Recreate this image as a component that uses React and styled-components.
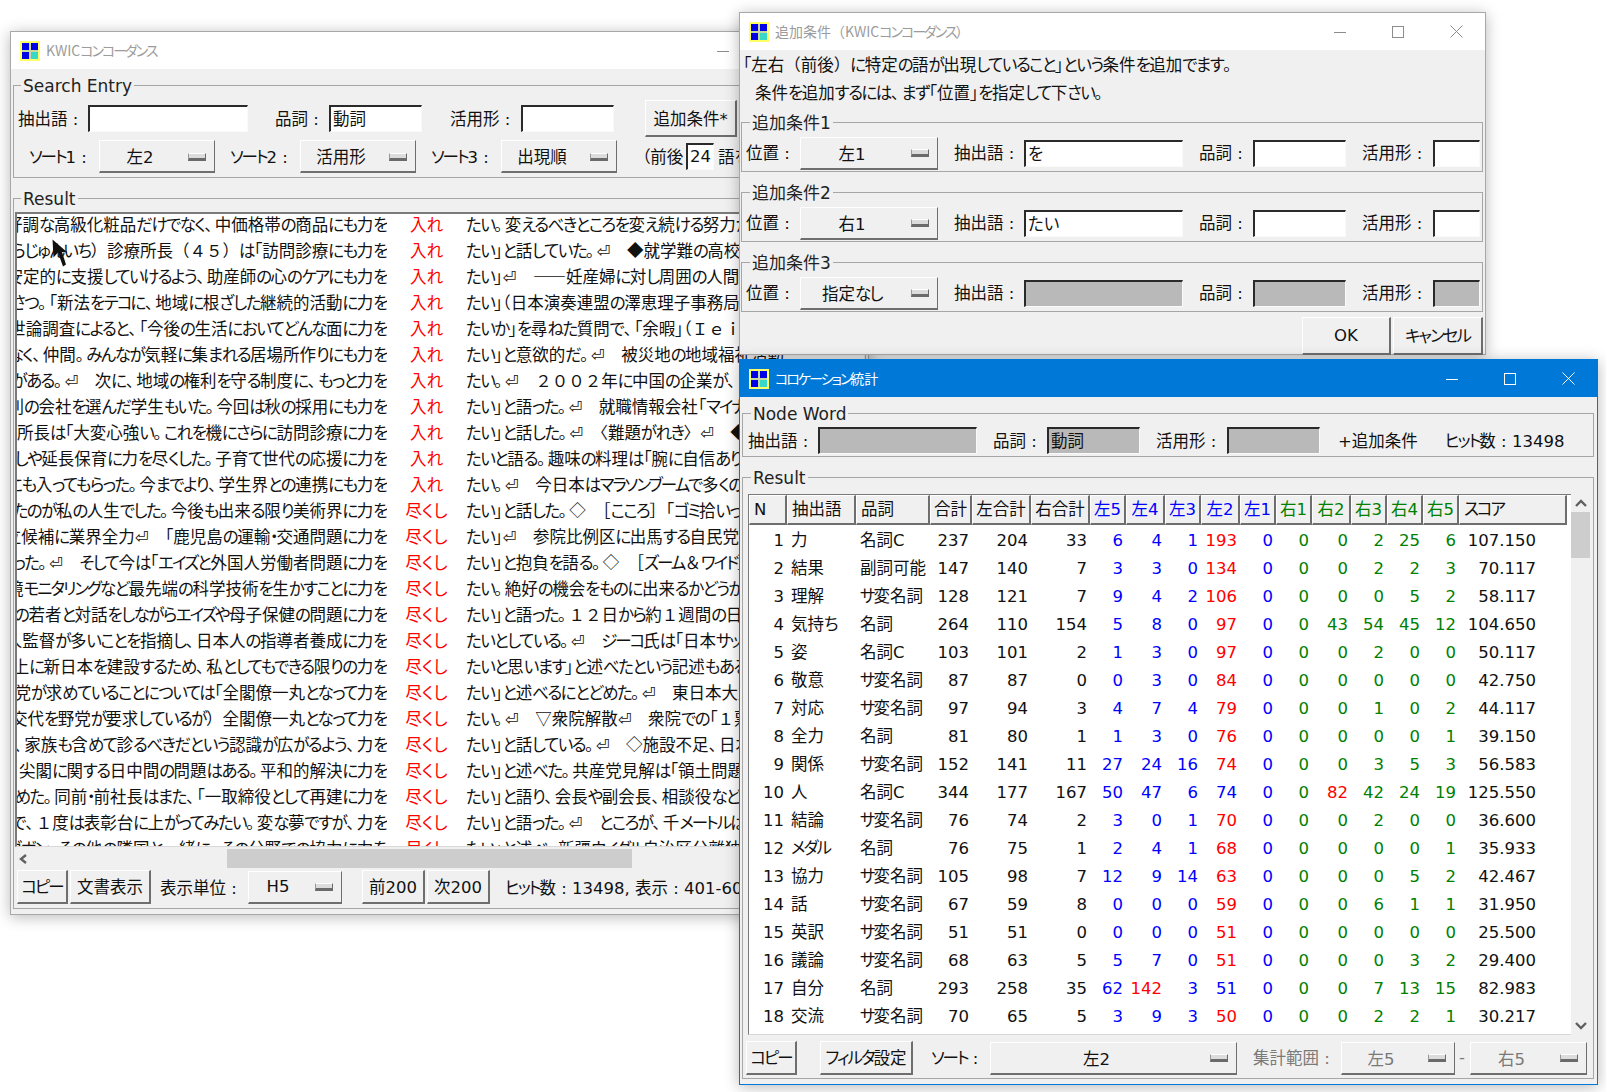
import React from "react";
import styled, { createGlobalStyle } from "styled-components";

const GlobalStyle = createGlobalStyle`
  html, body {
    margin: 0;
    padding: 0;
    background: #fff;
  }
  body {
    font-family: "DejaVu Sans", "Noto Sans CJK JP", sans-serif;
    font-size: 16.5px;
    color: #111;
    font-feature-settings: "palt";
  }
`;

const KWIC_ROWS = [
  ["好調な高級化粧品だけでなく、中価格帯の商品にも力を", "入れ", "たい。変えるべきところを変え続ける努力が"],
  ["（しらじゅんいち）診療所長（４５）は「訪問診療にも力を", "入れ", "たい」と話していた。⏎　◆就学難の高校生"],
  ["安定的に支援していけるよう、助産師の心のケアにも力を", "入れ", "たい」⏎　――妊産婦に対し周囲の人間が"],
  ["あいさつ。「新法をテコに、地域に根ざした継続的活動に力を", "入れ", "たい」（日本演奏連盟の澤恵理子事務局"],
  ["世論調査によると、「今後の生活においてどんな面に力を", "入れ", "たいか」を尋ねた質問で、「余暇」（Ｉｅｉ"],
  ["少なく、仲間。みんなが気軽に集まれる居場所作りにも力を", "入れ", "たい」と意欲的だ。⏎　被災地の地域福祉活動"],
  ["必要がある。⏎　次に、地域の権利を守る制度に、もっと力を", "入れ", "たい。⏎　２００２年に中国の企業が、"],
  ["別の会社を選んだ学生もいた。今回は秋の採用にも力を", "入れ", "たい」と語った。⏎　就職情報会社「マイナビ"],
  ["原所長は「大変心強い。これを機にさらに訪問診療に力を", "入れ", "たい」と話した。⏎　〈難題がれき〉⏎　◆大"],
  ["励ましや延長保育に力を尽くした。子育て世代の応援に力を", "入れ", "たいと語る。趣味の料理は「腕に自信あり"],
  ["委員にも入ってもらった。今までより、学生界との連携にも力を", "入れ", "たい。⏎　今日本はマラソンブームで多くの"],
  ["したのが私の人生でした。今後も出来る限り美術界に力を", "尽くし", "たい」と話した。◇　［こころ］「ゴミ拾いって"],
  ["立候補に業界全力⏎　「鹿児島の運輸・交通問題に力を", "尽くし", "たい」⏎　参院比例区に出馬する自民党の"],
  ["だった。⏎　そして今は「エイズと外国人労働者問題に力を", "尽くし", "たい」と抱負を語る。◇　［ズーム＆ワイド］"],
  ["環境モニタリングなど最先端の科学技術を生かすことに力を", "尽くし", "たい。絶好の機会をものに出来るかどうかで"],
  ["各国の若者と対話をしながらエイズや母子保健の問題に力を", "尽くし", "たい」と語った。１２日から約１週間の日程"],
  ["人監督が多いことを指摘し、日本人の指導者養成に力を", "尽くし", "たいとしている。⏎　ジーコ氏は「日本サッカー"],
  ["地上に新日本を建設するため、私としてもできる限りの力を", "尽くし", "たいと思います」と述べたという記述もある。"],
  ["野党が求めていることについては「全閣僚一丸となって力を", "尽くし", "たい」と述べるにとどめた。⏎　東日本大震災"],
  ["政権交代を野党が要求しているが）全閣僚一丸となって力を", "尽くし", "たい。⏎　▽衆院解散⏎　衆院での「１票"],
  ["なく、家族も含めて診るべきだという認識が広がるよう、力を", "尽くし", "たい」と話している。⏎　◇施設不足、日本"],
  ["、尖閣に関する日中間の問題はある。平和的解決に力を", "尽くし", "たい」と述べた。共産党見解は「領土問題"],
  ["求めた。同前・前社長はまた、「一取締役として再建に力を", "尽くし", "たい」と語り、会長や副会長、相談役など"],
  ["まで、１度は表彰台に上がってみたい。変な夢ですが、力を", "尽くし", "たい」と語った。⏎　ところが、千メートルは"],
  ["ゴボン、その他の隣国と一緒に、その分野での協力に力を", "尽くし", "たい」と述べ、新疆ウイグル自治区分離独立"],
];

const COLS = [
  { label: "N", kind: "n", w: 38 },
  { label: "抽出語", kind: "word", w: 69 },
  { label: "品詞", kind: "word", w: 74 },
  { label: "合計", kind: "sum", w: 42 },
  { label: "左合計", kind: "sum", w: 59 },
  { label: "右合計", kind: "sum", w: 59 },
  { label: "左5", kind: "left", w: 36 },
  { label: "左4", kind: "left", w: 39 },
  { label: "左3", kind: "left", w: 36 },
  { label: "左2", kind: "left", w: 39 },
  { label: "左1", kind: "left", w: 36 },
  { label: "右1", kind: "right", w: 36 },
  { label: "右2", kind: "right", w: 39 },
  { label: "右3", kind: "right", w: 36 },
  { label: "右4", kind: "right", w: 36 },
  { label: "右5", kind: "right", w: 36 },
  { label: "スコア", kind: "score", w: 108 },
];

const COLLOC_ROWS = [
  [1, "力", "名詞C", 237, 204, 33, 6, 4, 1, 193, 0, 0, 0, 2, 25, 6, "107.150"],
  [2, "結果", "副詞可能", 147, 140, 7, 3, 3, 0, 134, 0, 0, 0, 2, 2, 3, "70.117"],
  [3, "理解", "サ変名詞", 128, 121, 7, 9, 4, 2, 106, 0, 0, 0, 0, 5, 2, "58.117"],
  [4, "気持ち", "名詞", 264, 110, 154, 5, 8, 0, 97, 0, 0, 43, 54, 45, 12, "104.650"],
  [5, "姿", "名詞C", 103, 101, 2, 1, 3, 0, 97, 0, 0, 0, 2, 0, 0, "50.117"],
  [6, "敬意", "サ変名詞", 87, 87, 0, 0, 3, 0, 84, 0, 0, 0, 0, 0, 0, "42.750"],
  [7, "対応", "サ変名詞", 97, 94, 3, 4, 7, 4, 79, 0, 0, 0, 1, 0, 2, "44.117"],
  [8, "全力", "名詞", 81, 80, 1, 1, 3, 0, 76, 0, 0, 0, 0, 0, 1, "39.150"],
  [9, "関係", "サ変名詞", 152, 141, 11, 27, 24, 16, 74, 0, 0, 0, 3, 5, 3, "56.583"],
  [10, "人", "名詞C", 344, 177, 167, 50, 47, 6, 74, 0, 0, 82, 42, 24, 19, "125.550"],
  [11, "結論", "サ変名詞", 76, 74, 2, 3, 0, 1, 70, 0, 0, 0, 2, 0, 0, "36.600"],
  [12, "メダル", "名詞", 76, 75, 1, 2, 4, 1, 68, 0, 0, 0, 0, 0, 1, "35.933"],
  [13, "協力", "サ変名詞", 105, 98, 7, 12, 9, 14, 63, 0, 0, 0, 0, 5, 2, "42.467"],
  [14, "話", "サ変名詞", 67, 59, 8, 0, 0, 0, 59, 0, 0, 0, 6, 1, 1, "31.950"],
  [15, "英訳", "サ変名詞", 51, 51, 0, 0, 0, 0, 51, 0, 0, 0, 0, 0, 0, "25.500"],
  [16, "議論", "サ変名詞", 68, 63, 5, 5, 7, 0, 51, 0, 0, 0, 0, 3, 2, "29.400"],
  [17, "自分", "名詞", 293, 258, 35, 62, 142, 3, 51, 0, 0, 0, 7, 13, 15, "82.983"],
  [18, "交流", "サ変名詞", 70, 65, 5, 3, 9, 3, 50, 0, 0, 0, 2, 2, 1, "30.217"],
];

const CONDITIONS = [
  { title: "追加条件1", pos: "左1", word: "を" },
  { title: "追加条件2", pos: "右1", word: "たい" },
  { title: "追加条件3", pos: "指定なし", off: true },
];

const kindColor = (kind) => {
  if (kind === "left") return "#0000ff";
  if (kind === "right") return "#008000";
  return "#111";
};

// the original font has narrow kana and full width brackets, so text is split into runs
const RUNS = /[\u3040-\u309f]+|[、。]+|[\u30a0-\u30ff・]+|[（）０-９Ａ-Ｚａ-ｚ＆［］〈〉　◆◇▽―]+|[^\u3040-\u30ff、。・（）０-９Ａ-Ｚａ-ｚ＆［］〈〉　◆◇▽―]+/g;

const Jp = ({ children }) => {
  const text = String(children);
  return text.match(RUNS).map((run, i) => {
    if (/^[\u3040-\u309f]/.test(run)) return <Hira key={i}>{run}</Hira>;
    if (/^[、。]/.test(run)) return <Punct key={i}>{run}</Punct>;
    if (/^[\u30a0-\u30ff・]/.test(run)) return <Kata key={i}>{run}</Kata>;
    if (/^[（）０-９Ａ-Ｚａ-ｚ＆［］〈〉　◆◇▽―]/.test(run)) return <Wide key={i}>{run}</Wide>;
    return <React.Fragment key={i}>{run}</React.Fragment>;
  });
};

const AppIcon = () => (
  <svg width="20" height="20" viewBox="0 0 20 20">
    <rect width="20" height="20" fill="#ffff66" />
    <rect x="2" y="2" width="16" height="16" fill="#c8d8a0" />
    <rect x="2" y="2" width="7" height="7" fill="#0000e6" />
    <rect x="11" y="2" width="7" height="7" fill="#0000e6" />
    <rect x="2" y="11" width="7" height="7" fill="#0000e6" />
    <rect x="11" y="11" width="7" height="7" fill="#38d8c8" />
  </svg>
);

const TitleControls = ({ color }) => (
  <>
    <CtlBox>
      <svg width="12" height="12" viewBox="0 0 12 12">
        <path d="M0 6.5H12" stroke={color} strokeWidth="1" />
      </svg>
    </CtlBox>
    <CtlBox>
      <svg width="12" height="12" viewBox="0 0 12 12">
        <rect x="0.5" y="0.5" width="11" height="11" fill="none" stroke={color} strokeWidth="1" />
      </svg>
    </CtlBox>
    <CtlBox>
      <svg width="13" height="13" viewBox="0 0 13 13">
        <path d="M0.5 0.5L12.5 12.5M12.5 0.5L0.5 12.5" stroke={color} strokeWidth="1" />
      </svg>
    </CtlBox>
  </>
);

const TitleBar = ({ title, active }) => (
  <TitleRow $active={active}>
    <AppIcon />
    <TitleText $active={active}><Jp>{title}</Jp></TitleText>
    <TitleControls color={active ? "#fff" : "#8c8c8c"} />
  </TitleRow>
);

const Select = ({ w, ml, off, children }) => (
  <SelectBox type="button" $w={w} $ml={ml}>
    <SelectText $off={off}><Jp>{children}</Jp></SelectText>
    <SelectArrow />
  </SelectBox>
);

const Chevron = ({ d }) => (
  <svg width="14" height="10" viewBox="0 0 14 10">
    <path d={d} fill="none" stroke="#606060" strokeWidth="2.4" />
  </svg>
);

const App = () => (
  <>
    <GlobalStyle />
    <Desktop>
      <KwicWindow>
        <TitleBar title="KWICコンコーダンス" />
        <SearchGroup>
          <GroupTitle $ml={7}>Search Entry</GroupTitle>
          <FieldRow $h={37}>
            <Label $w={70} $ml={4}>抽出語 :</Label>
            <Input $w={160} readOnly value="" />
            <Label $w={54} $ml={27}>品詞 :</Label>
            <Input $w={93} readOnly value="動詞" />
            <Label $w={71} $ml={28}>活用形 :</Label>
            <Input $w={93} readOnly value="" />
            <Button $w={92} $h={37} $ml={31}>追加条件*</Button>
          </FieldRow>
          <FieldRow $h={33} $mt={3}>
            <Label $w={70} $ml={15}><Jp>ソート1 :</Jp></Label>
            <Select w={116}>左2</Select>
            <Label $w={70} $ml={15}><Jp>ソート2 :</Jp></Label>
            <Select w={116}>活用形</Select>
            <Label $w={70} $ml={15}><Jp>ソート3 :</Jp></Label>
            <Select w={116}>出現順</Select>
            <Label $w={44} $ml={25}>（前後</Label>
            <Input $w={28} readOnly value="24" />
            <Label $w={40} $ml={4}><Jp>語を</Jp></Label>
          </FieldRow>
        </SearchGroup>
        <KwicResult>
          <GroupTitle $ml={6}>Result</GroupTitle>
          <KwicList>
            {KWIC_ROWS.map((row, i) => (
              <KwicRow key={i}>
                <KwicLeft>
                  <span><Jp>{row[0]}</Jp></span>
                </KwicLeft>
                <KwicKey>{row[1]}</KwicKey>
                <KwicRight><Jp>{row[2]}</Jp></KwicRight>
              </KwicRow>
            ))}
          </KwicList>
          <HScroll>
            <HScrollArrow>
              <Chevron d="M9 1L4 5L9 9" />
            </HScrollArrow>
            <HThumb />
          </HScroll>
          <FootRow>
            <Button $w={51} $h={34}><Jp>コピー</Jp></Button>
            <Button $w={81} $h={34} $ml={2}>文書表示</Button>
            <Label $w={88} $ml={9}>表示単位 :</Label>
            <Select w={94}>H5</Select>
            <Button $w={63} $h={34} $ml={20}>前200</Button>
            <Button $w={63} $h={34} $ml={2}>次200</Button>
            <Label $ml={15}><Jp>ヒット数 : 13498, 表示 : 401-600</Jp></Label>
          </FootRow>
        </KwicResult>
      </KwicWindow>

      <DialogWindow>
        <TitleBar title="追加条件（KWICコンコーダンス）" />
        <DialogLine $pl={3} $mt={1}><Jp>「左右（前後）に特定の語が出現していること」という条件を追加でます。</Jp></DialogLine>
        <DialogLine $pl={15}><Jp>条件を追加するには、まず「位置」を指定して下さい。</Jp></DialogLine>
        {CONDITIONS.map((c) => (
          <CondGroup key={c.title}>
            <GroupTitle>{c.title}</GroupTitle>
            <FieldRow $h={34}>
              <Label $w={54} $ml={4}>位置 :</Label>
              <Select w={138}>{c.pos}</Select>
              <Label $w={70} $ml={16}>抽出語 :</Label>
              <Input $w={159} $off={c.off} readOnly value={c.word || ""} />
              <Label $w={54} $ml={16}>品詞 :</Label>
              <Input $w={93} $off={c.off} readOnly value="" />
              <Label $w={71} $ml={16}>活用形 :</Label>
              <Input $w={47} $off={c.off} readOnly value="" />
            </FieldRow>
          </CondGroup>
        ))}
        <DialogFoot>
          <Button $w={89} $h={38}>OK</Button>
          <Button $w={90} $h={38} $ml={2}><Jp>キャンセル</Jp></Button>
        </DialogFoot>
      </DialogWindow>

      <CollocWindow>
        <TitleBar title="コロケーション統計" active />
        <NodeGroup>
          <GroupTitle>Node Word</GroupTitle>
          <FieldRow $h={27}>
            <Label $w={70} $ml={5}>抽出語 :</Label>
            <Input $w={159} $off readOnly value="" />
            <Label $w={54} $ml={16}>品詞 :</Label>
            <Input $w={93} $off readOnly value="動詞" />
            <Label $w={71} $ml={16}>活用形 :</Label>
            <Input $w={93} $off readOnly value="" />
            <Label $ml={18}>+追加条件</Label>
            <Label $ml={27}><Jp>ヒット数 : 13498</Jp></Label>
          </FieldRow>
        </NodeGroup>
        <CollocResult>
          <GroupTitle $ml={3}>Result</GroupTitle>
          <TableWrap>
            <Table>
              <HeadRow>
                {COLS.map((c) => (
                  <HeadCell key={c.label} $kind={c.kind}><Jp>{c.label}</Jp></HeadCell>
                ))}
              </HeadRow>
              <TableBody>
                {COLLOC_ROWS.map((row) => {
                  const top = Math.max(...row.slice(6, 16));
                  return (
                    <DataRow key={row[0]}>
                      {row.map((v, i) => (
                        <DataCell
                          key={i}
                          $kind={COLS[i].kind}
                          $top={i >= 6 && i < 16 && v === top}
                        >
                          <Jp>{v}</Jp>
                        </DataCell>
                      ))}
                    </DataRow>
                  );
                })}
              </TableBody>
            </Table>
            <VScroll>
              <Chevron d="M2 8L7 3L12 8" />
              <VThumb />
              <VSpacer />
              <Chevron d="M2 2L7 7L12 2" />
            </VScroll>
          </TableWrap>
          <CollocFoot>
            <Button $w={51} $h={34}><Jp>コピー</Jp></Button>
            <Button $w={93} $h={34} $ml={23}><Jp>フィルタ設定</Jp></Button>
            <Label $w={59} $ml={18}><Jp>ソート :</Jp></Label>
            <Select w={247}>左2</Select>
            <Label $w={88} $ml={16} $off>集計範囲 :</Label>
            <Select w={114} off>左5</Select>
            <Label $w={11} $ml={4} $off>-</Label>
            <Select w={117} off>右5</Select>
          </CollocFoot>
        </CollocResult>
      </CollocWindow>

      <Cursor width="16" height="28" viewBox="0 0 16 28">
        <path d="M0.5 0.5L1.5 18.5L6 13.5L11 27.5L14 25.5L10 13L15.5 13.5Z" fill="#111" />
      </Cursor>
    </Desktop>
  </>
);

export default App;

const Hira = styled.span`
  letter-spacing: -1.5px;
`;

const Kata = styled.span`
  letter-spacing: -2px;
`;

const Punct = styled.span`
  line-height: 0;
  font-family: "Noto Sans CJK JP", sans-serif;
  font-feature-settings: normal;
  letter-spacing: -6px;
`;

const Wide = styled.span`
  line-height: 0;
  font-family: "Noto Sans CJK JP", sans-serif;
  font-feature-settings: normal;
`;

const Desktop = styled.div`
  position: relative;
  width: 1606px;
  height: 1092px;
  overflow: hidden;
  background: #fff;
`;

const Win = styled.div`
  position: absolute;
  box-sizing: border-box;
  display: flex;
  flex-direction: column;
  background: #f0f0f0;
  border: 1px solid #a8a8a8;
  box-shadow: 0 2px 14px rgba(0, 0, 0, 0.28);
`;

const KwicWindow = styled(Win)`
  left: 10px;
  top: 31px;
  width: 859px;
  height: 884px;
`;

const DialogWindow = styled(Win)`
  left: 739px;
  top: 12px;
  width: 747px;
  height: 343px;
`;

const CollocWindow = styled(Win)`
  left: 739px;
  top: 359px;
  width: 859px;
  height: 726px;
  border: 1.5px solid #0078d7;
`;

const TitleRow = styled.div`
  flex: none;
  display: flex;
  align-items: center;
  height: 37px;
  padding-left: 9px;
  background: ${(p) => (p.$active ? "#0078d7" : "#fff")};
`;

const TitleText = styled.div`
  flex: 1;
  margin-left: 6px;
  font-size: 14px;
  line-height: 20px;
  padding-bottom: 2px;
  font-family: "Noto Sans CJK JP", sans-serif;
  color: ${(p) => (p.$active ? "#fff" : "#9c9c9c")};
  white-space: nowrap;
`;

const CtlBox = styled.div`
  flex: none;
  width: 58px;
  display: flex;
  align-items: center;
  justify-content: center;
`;

const Group = styled.fieldset`
  box-sizing: border-box;
  min-width: 0;
  margin: 0;
  padding: 0;
  border: 1px solid #a6a6a6;
`;

const GroupTitle = styled.legend`
  margin-left: ${(p) => (p.$ml === undefined ? 8 : p.$ml)}px;
  padding: 2px 2px 0;
  font-size: 17px;
  line-height: 22px;
  color: #222;
`;

const SearchGroup = styled(Group)`
  flex: none;
  height: 105px;
  margin: 4px 2px 0 2px;
  padding-top: 3px;
`;

const KwicResult = styled(Group)`
  flex: none;
  height: 723px;
  margin: 8px 2px 0 2px;
  padding: 2px 1px 0;
`;

const CondGroup = styled(Group)`
  flex: none;
  height: 62px;
  margin: 3px 2px 5px 1px;
  padding-top: 2px;
`;

const NodeGroup = styled(Group)`
  flex: none;
  height: 56px;
  margin: 4px 3px 0 2px;
  padding-top: 2px;
`;

const CollocResult = styled(Group)`
  flex: none;
  height: 614px;
  margin: 8px 3px 0 2px;
  padding: 5px 2px 0 5px;
`;

const FieldRow = styled.div`
  display: flex;
  align-items: center;
  height: ${(p) => p.$h}px;
  margin-top: ${(p) => p.$mt || 0}px;
`;

const Label = styled.span`
  flex: none;
  box-sizing: border-box;
  width: ${(p) => (p.$w ? `${p.$w}px` : "auto")};
  margin-left: ${(p) => p.$ml || 0}px;
  padding-bottom: 2px;
  white-space: nowrap;
  color: ${(p) => (p.$off ? "#7a7a7a" : "#111")};
`;

const Input = styled.input`
  flex: none;
  box-sizing: border-box;
  width: ${(p) => p.$w}px;
  height: 27px;
  margin: 0;
  padding: 0 2px 2px;
  font: inherit;
  font-feature-settings: inherit;
  color: #111;
  outline: none;
  background: ${(p) => (p.$off ? "#b9b9b9" : "#fff")};
  border-style: solid;
  border-width: 2px 1px 1px 2px;
  border-color: #2a2a2a #fafafa #fafafa #2a2a2a;
`;

const Button = styled.button`
  flex: none;
  box-sizing: border-box;
  width: ${(p) => p.$w}px;
  height: ${(p) => p.$h}px;
  margin: 0 0 0 ${(p) => p.$ml || 0}px;
  padding: 0 0 1px;
  font: inherit;
  font-feature-settings: inherit;
  color: #111;
  white-space: nowrap;
  background: #f0f0f0;
  border-style: solid;
  border-width: 1px 2px 2px 1px;
  border-color: #fff #6e6e6e #6e6e6e #fff;
`;

const SelectBox = styled.button`
  flex: none;
  box-sizing: border-box;
  display: flex;
  align-items: center;
  width: ${(p) => p.$w}px;
  height: 33px;
  margin: 0 0 0 ${(p) => p.$ml || 0}px;
  padding: 0 8px 0 0;
  font: inherit;
  font-feature-settings: inherit;
  background: #f0f0f0;
  border-style: solid;
  border-width: 1px 1px 2px 1px;
  border-color: #fff #6e6e6e #6e6e6e #fff;
`;

const SelectText = styled.span`
  flex: 1;
  padding-right: 8px;
  text-align: center;
  white-space: nowrap;
  color: ${(p) => (p.$off ? "#7a7a7a" : "#111")};
`;

const SelectArrow = styled.span`
  flex: none;
  box-sizing: border-box;
  width: 18px;
  height: 8px;
  margin-top: 1px;
  background: #dcdcdc;
  border-style: solid;
  border-width: 1px 1px 3px 1px;
  border-color: #fff #6a6a6a #6a6a6a #9a9a9a;
`;

const KwicList = styled.div`
  box-sizing: border-box;
  flex: none;
  height: 635px;
  overflow: hidden;
  background: #fff;
  border-style: solid;
  border-width: 2px 0 1px 2px;
  border-color: #7a7a7a #e0e0e0 #d8d8d8 #7a7a7a;
`;

const KwicRow = styled.div`
  display: grid;
  grid-template-columns: 370px 79px 1fr;
  height: 26px;
  line-height: 24px;
  white-space: nowrap;
`;

const KwicLeft = styled.div`
  display: flex;
  justify-content: flex-end;
  overflow: hidden;
`;

const KwicKey = styled.div`
  text-align: center;
  color: #ff0000;
`;

const KwicRight = styled.div`
  overflow: hidden;
`;

const HScroll = styled.div`
  display: flex;
  align-items: center;
  height: 23px;
`;

const HScrollArrow = styled.div`
  flex: none;
  width: 210px;
  padding-left: 2px;
  display: flex;
`;

const HThumb = styled.div`
  flex: none;
  width: 405px;
  height: 19px;
  background: #cdcdcd;
`;

const FootRow = styled.div`
  display: flex;
  align-items: center;
  height: 34px;
  padding-left: 2px;

  & > span {
    padding-bottom: 0;
  }
`;

const DialogLine = styled.div`
  flex: none;
  height: 28px;
  margin-top: ${(p) => p.$mt || 0}px;
  line-height: 30px;
  padding-left: ${(p) => p.$pl}px;
  white-space: nowrap;
`;

const DialogFoot = styled.div`
  display: flex;
  justify-content: flex-end;
  padding-right: 2px;
`;

const TableWrap = styled.div`
  display: flex;
  height: 541px;
`;

const Table = styled.div`
  flex: none;
  box-sizing: border-box;
  width: 823px;
  height: 541px;
  overflow: hidden;
  background: #fff;
  border-style: solid;
  border-width: 1px 0 1px 1px;
  border-color: #7a7a7a #fff #d8d8d8 #7a7a7a;
`;

const gridCols = COLS.map((c) => `${c.w}px`).join(" ");

const HeadRow = styled.div`
  display: grid;
  grid-template-columns: ${gridCols};
  height: 30px;
`;

const HeadCell = styled.div`
  box-sizing: border-box;
  padding: 0 0 0 ${(p) => (p.$kind === "sum" || p.$kind === "left" || p.$kind === "right" ? 0 : 4)}px;
  text-align: ${(p) => (p.$kind === "sum" || p.$kind === "left" || p.$kind === "right" ? "center" : "left")};
  line-height: 27px;
  white-space: nowrap;
  color: ${(p) => kindColor(p.$kind)};
  background: #f0f0f0;
  border-style: solid;
  border-width: 1px 2px 2px 1px;
  border-color: #fff #6e6e6e #6e6e6e #fff;
`;

const TableBody = styled.div`
  padding-top: 2px;
`;

const DataRow = styled.div`
  display: grid;
  grid-template-columns: ${gridCols};
  height: 28px;
  line-height: 28px;
`;

const DataCell = styled.div`
  white-space: nowrap;
  text-align: ${(p) => (p.$kind === "word" ? "left" : "right")};
  padding: ${(p) => {
    if (p.$kind === "word") return "0 0 0 4px";
    if (p.$kind === "score") return "0 31px 0 0";
    return "0 3px 0 0";
  }};
  color: ${(p) => (p.$top ? "#ff0000" : kindColor(p.$kind))};
`;

const VScroll = styled.div`
  flex: none;
  width: 19px;
  margin-left: 0;
  display: flex;
  flex-direction: column;
  align-items: center;
  padding: 4px 0;
  box-sizing: border-box;
`;

const VThumb = styled.div`
  flex: none;
  width: 19px;
  height: 46px;
  margin-top: 4px;
  background: #cdcdcd;
`;

const VSpacer = styled.div`
  flex: 1;
`;

const CollocFoot = styled.div`
  display: flex;
  align-items: center;
  height: 34px;
  margin-top: 6px;
  margin-left: -2px;
`;

const Cursor = styled.svg`
  position: absolute;
  left: 52px;
  top: 239px;
`;
